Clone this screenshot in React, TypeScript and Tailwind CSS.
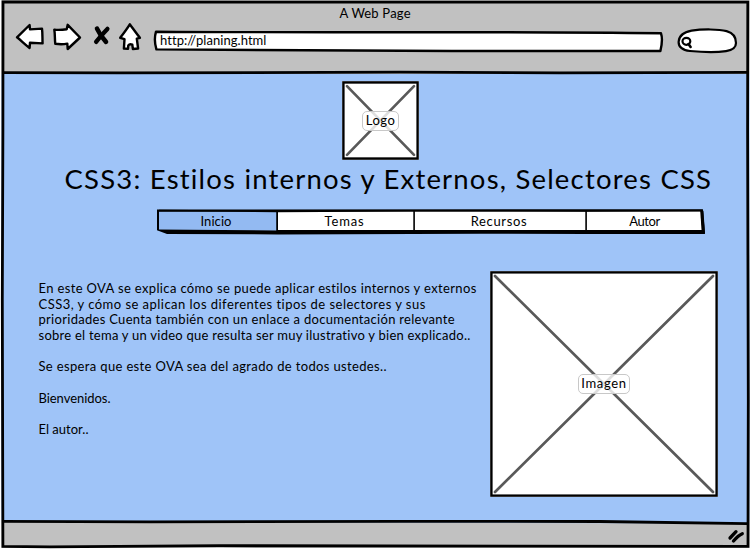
import { useLayoutEffect, useRef, useState } from "react";
import type { ReactNode } from "react";

// One line of text whose letter spacing is adjusted to fill a given width.
function Fit({ text, width, className = "" }: { text: string; width: number; className?: string }) {
  const ref = useRef<HTMLSpanElement>(null);
  const [spacing, setSpacing] = useState(0);
  useLayoutEffect(() => {
    const el = ref.current;
    if (!el) return;
    el.style.letterSpacing = "0px";
    const next = (width - el.getBoundingClientRect().width) / Math.max(1, text.length - 1);
    el.style.letterSpacing = `${next}px`;
    setSpacing(next);
  }, [text, width]);
  return (
    <span ref={ref} className={`inline-block whitespace-pre ${className}`} style={{ letterSpacing: `${spacing}px` }}>
      {text}
    </span>
  );
}

function Sketch({ box, className = "", children }: { box: string; className?: string; children: ReactNode }) {
  return (
    <svg
      viewBox={box}
      className={className}
      fill="none"
      stroke="black"
      strokeWidth="2.4"
      strokeLinejoin="round"
      strokeLinecap="round"
    >
      {children}
    </svg>
  );
}

function Header() {
  return (
    <header className="flex h-[74px] shrink-0 flex-col bg-[#c1c1c1]">
      <div className="ml-[339.5px] h-[22px] pt-[5px] leading-[16px]">
        <Fit text="A Web Page" width={71} />
      </div>
      <div className="flex h-8 items-start pl-[14px]">
        <Sketch box="14 22 32 30" className="h-[30px] w-8 shrink-0">
          <path fill="white" d="M17 37.3 29.6 25l.4 4.4 12-.8c.7 5 .3 10 .6 14.8L30 42.7l-.4 5.3C25 44.5 21 40.5 17 37.3Z" />
        </Sketch>
        <Sketch box="51 22 32 30" className="ml-[5px] h-[30px] w-8 shrink-0">
          <path fill="white" d="M54.3 29.6c4 .6 8 .3 12.4-.4l1-4.4L80 37.5 67.7 49l-.4-5.4c-4 .9-8 .8-12 .2-.7-5-.1-9-1-14.2Z" />
        </Sketch>
        <Sketch box="92 22 20 30" className="ml-[9px] h-[30px] w-5 shrink-0">
          <path strokeWidth="4.6" d="M97 28.600c2.300 5 5.600 9.600 9 13.200" />
          <path strokeWidth="4.3" d="M107.400 28.900c-3.800 4-7.700 8.200-11.300 13" />
        </Sketch>
        <Sketch box="117 20 28 32" className="-mt-0.5 ml-[5px] h-8 w-7 shrink-0">
          <path fill="white" d="M129.8 24.3c3.2 4.3 6.5 9 10.1 13.5l-3.1.9 1.3 9.8-5.2.5-.6-4.3c-1.7-.7-3.2-.4-4 .7l-.3 3.5-4.1-.4.6-9.4-4.3-1.3c3.2-4.2 6.7-8.8 9.6-13.5Z" />
        </Sketch>
        <div className="relative ml-[8px] mt-[6px] h-[27px] w-[512px] shrink-0">
          <Sketch box="153 28 512 27" className="absolute inset-0 h-[27px] w-[512px]">
            <path
              fill="white"
              d="M156 31.7c160 1.4 330-.6 505 1.6 1.7 5 1 11-.6 17.7-170 .8-330-.7-504-1.6-1.8-6-2.1-12-.4-17.7Z"
            />
          </Sketch>
          <div className="relative pl-[7px] pt-[4px] leading-[16px]">
            <Fit text="http://planing.html" width={106} />
          </div>
        </div>
        <Sketch box="675 26 64 30" className="ml-[10px] mt-1 h-[30px] w-16 shrink-0">
          <path
            fill="white"
            strokeWidth="2.2"
            d="M678.6 42c.3-7 6-10 13-11.3 11-1.8 27-1.6 35 .4 7 2 9.500 7 9.400 12 0 5-4 7.200-10 8.100-10 1.400-24 1-36-.2-7-.8-11.400-4-11.400-9Z"
          />
          <ellipse cx="686.400" cy="41.300" rx="3.900" ry="3.500" strokeWidth="2.200" />
          <path strokeWidth="2.600" d="m688.500 44 2.100 3" />
        </Sketch>
      </div>
    </header>
  );
}

function Placeholder({ size, label, labelWidth, tag }: { size: number; label: string; labelWidth: number; tag: string }) {
  const end = size - 5;
  return (
    <div className="relative flex h-full w-full items-center justify-center bg-white">
      <svg viewBox={`0 0 ${size} ${size}`} preserveAspectRatio="none" className="absolute inset-0 h-full w-full">
        <rect x="1.400" y="1.400" width={size - 2.8} height={size - 2.8} fill="none" stroke="black" strokeWidth="2.400" />
        <path d={`M5 5 ${end} ${end}M${end} 5 5 ${end}`} stroke="#595959" strokeWidth="2.700" strokeLinecap="round" />
      </svg>
      <div className={`relative flex h-5 justify-center rounded-[5px] border border-[#c8c8c8] bg-white/80 leading-[16px] ${tag}`}>
        <Fit text={label} width={labelWidth} />
      </div>
    </div>
  );
}

function Nav() {
  return (
    <nav className="relative ml-[155px] mt-[8px] h-[29px] w-[552px] shrink-0">
      <svg viewBox="155 207 552 29" className="absolute inset-0 h-[29px] w-[552px]">
        <path d="M157 209.500 703 209.200 705 234H586L480 233.700 278 234.400 167 234 157 230.300Z" />
        <path fill="white" d="M277 211.600H701L702 230H277Z" />
        <path fill="#93baf2" d="M159 211.800 276.600 211.300V230.400L159 229.600Z" />
        <path d="M277.200 210V232M414.100 210V232M586.100 210V233" stroke="black" strokeWidth="1.600" />
        <path d="M159 210.600 277 211.400 414 210.700 586 211 702 210.500" fill="none" stroke="black" strokeWidth="1.500" />
        <path d="m701.800 211 1.600 22" stroke="black" strokeWidth="3.200" />
      </svg>
      <div className="relative flex pl-[2px] pt-[6px] leading-[16px]">
        <span className="flex w-[118px] justify-center">
          <Fit text="Inicio" width={31} />
        </span>
        <span className="flex w-[139px] justify-center">
          <Fit text="Temas" width={39} />
        </span>
        <span className="flex w-[170px] justify-center">
          <Fit text="Recursos" width={56} />
        </span>
        <span className="flex w-[121px] justify-center">
          <Fit text="Autor" width={31} />
        </span>
      </div>
    </nav>
  );
}

const lines: { text: string; width: number }[] = [
  { text: "En este OVA se explica cómo se puede aplicar estilos internos y externos", width: 438 },
  { text: "CSS3, y cómo se aplican los diferentes tipos de selectores y sus", width: 387 },
  { text: "prioridades Cuenta también con un enlace a documentación relevante", width: 416 },
  { text: "sobre el tema y un video que resulta ser muy ilustrativo y bien explicado..", width: 432 },
  { text: "", width: 0 },
  { text: "Se espera que este OVA sea del agrado de todos ustedes..", width: 348 },
  { text: "", width: 0 },
  { text: "Bienvenidos.", width: 72 },
  { text: "", width: 0 },
  { text: "El autor..", width: 50 },
];

export default function App() {
  return (
    <div className="relative flex h-[549px] w-[750px] flex-col overflow-hidden bg-[#9fc4f8] font-[Lato,'Open_Sans',sans-serif] text-[13px] text-black">
      <Header />
      <main className="flex h-[446px] shrink-0 flex-col">
        <div className="ml-[342px] mt-[7px] h-[79px] w-[77px] shrink-0">
          <Placeholder size={77} label="Logo" labelWidth={29} tag="w-[37px]" />
        </div>
        <h1 className="ml-[64.5px] h-[39px] text-[27.5px] leading-[38px]">
          <Fit text="CSS3: Estilos internos y Externos, Selectores CSS" width={647} />
        </h1>
        <Nav />
        <div className="flex">
          <div className="ml-[38.500px] mt-[45px] w-[451.500px] shrink-0">
            {lines.map((line, i) => (
              <p key={i} className="h-[15.670px] leading-[15.670px]">
                {line.text && <Fit text={line.text} width={line.width} />}
              </p>
            ))}
          </div>
          <div className="mt-[35px] h-[226px] w-[228px] shrink-0">
            <Placeholder size={228} label="Imagen" labelWidth={45} tag="w-[52px]" />
          </div>
        </div>
      </main>
      <footer className="flex h-[29px] shrink-0 justify-end bg-[#c1c1c1] pr-[3px] pt-[7px]">
        <Sketch box="727 527 20 20" className="size-5">
          <path strokeWidth="3.300" d="M736 531.700 730 538M742.300 533.700C739 535 736 538 733.500 541" />
        </Sketch>
      </footer>
      {/* hand-drawn window frame */}
      <svg viewBox="0 0 750 549" className="pointer-events-none absolute inset-0 h-[549px] w-[750px]" fill="none" stroke="black">
        <path d="M3 521.700 748 523.500V519H3Z" fill="#9fc4f8" stroke="none" />
        <path d="M0 0H1.500V549H0ZM749.500 0h.5v549h-.500ZM0 548H750v1H0Z" fill="white" stroke="none" />
        <path strokeWidth="2.800" d="M3 2 747.800 2.100 747.600 130 748.300 400 748 546.400 220 545.700 50 546.800 2.900 546.300 2.300 300 2.900 130Z" />
        <path strokeWidth="2.800" d="M3 72.600 120 72.900 400 72.200 560 72.800 747 72.300M3 521.300 150 521.900 400 521.300 600 521.500 747 523.600" />
      </svg>
    </div>
  );
}
